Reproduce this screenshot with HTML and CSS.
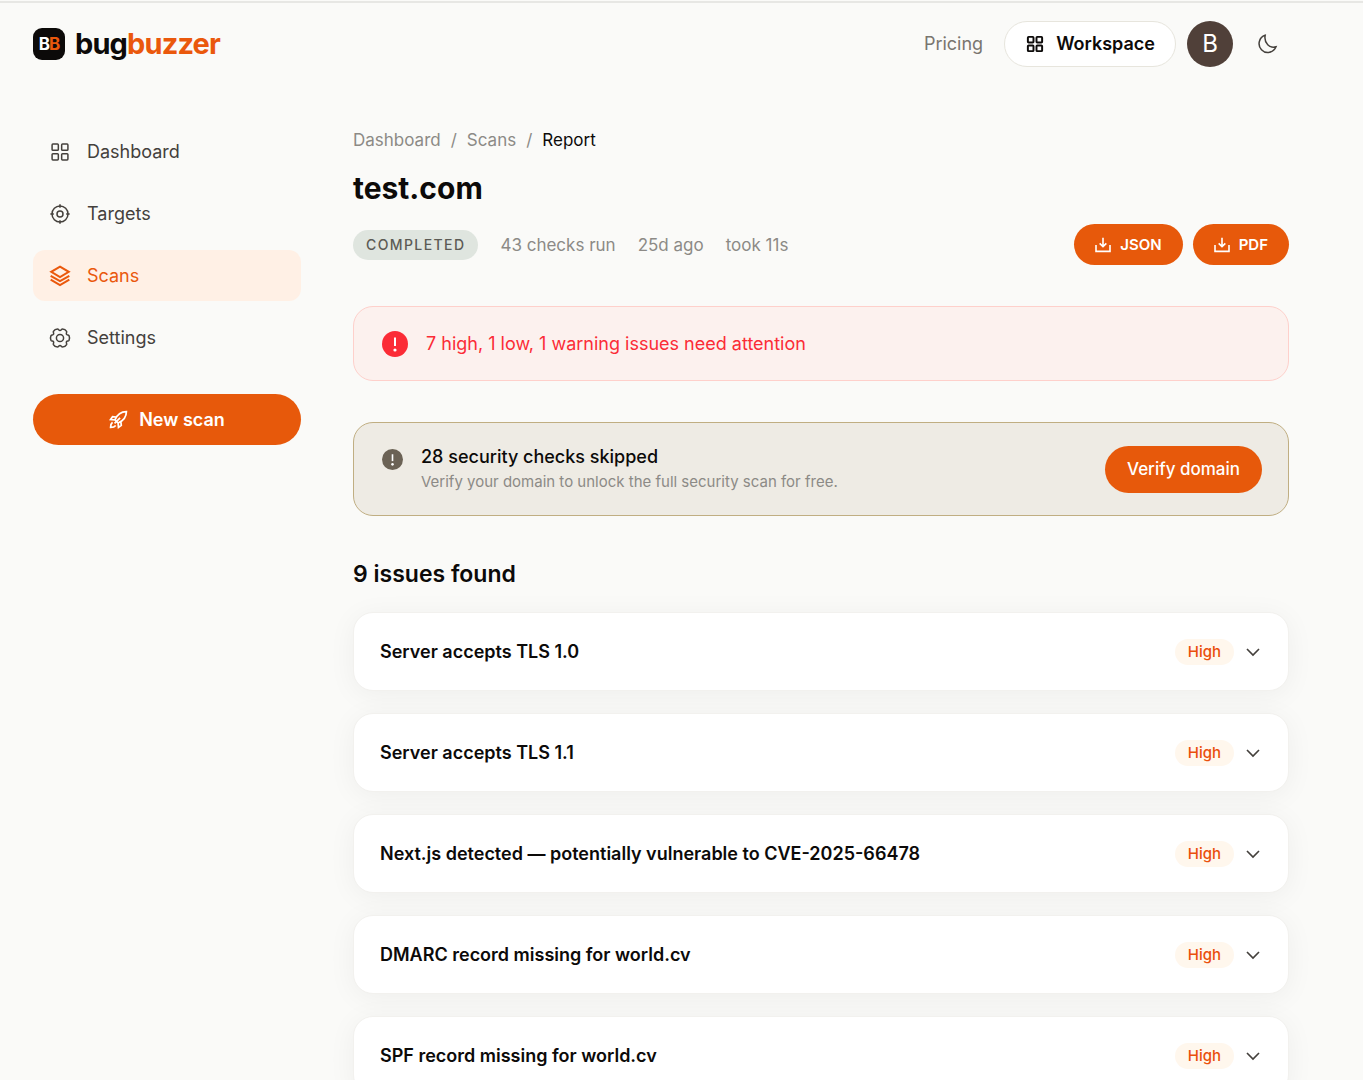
FILE: index.html
```html
<!DOCTYPE html>
<html lang="en">
<head>
    <meta charset="UTF-8">
    <meta name="viewport" content="width=device-width, initial-scale=1.0">
    <title>test.com - bugbuzzer</title>
    <link rel="stylesheet" href="styles.css">
</head>
<body>
    <!-- shared icons -->
    <svg class="sprite" aria-hidden="true">
        <symbol id="icon-grid" viewBox="0 0 24 24">
            <rect x="2.5" y="2.5" width="7.5" height="7.5" rx="1"/>
            <rect x="14" y="2.5" width="7.5" height="7.5" rx="1"/>
            <rect x="2.5" y="14" width="7.5" height="7.5" rx="1"/>
            <rect x="14" y="14" width="7.5" height="7.5" rx="1"/>
        </symbol>
        <symbol id="icon-download" viewBox="0 0 24 24">
            <path d="M12 1v13M7 9.5l5 5 5-5M1.5 12v9.500h21V12"/>
        </symbol>
        <symbol id="icon-chevron" viewBox="0 0 24 24">
            <path d="M4 8l8 8 8-8"/>
        </symbol>
        <symbol id="icon-alert" viewBox="0 0 26 26">
            <circle cx="13" cy="13" r="13" fill="currentColor" stroke="none"/>
            <path d="M13 6.5v8.5" stroke="#fff" stroke-width="2"/>
            <circle cx="13" cy="19" r="1.6" fill="#fff" stroke="none"/>
        </symbol>
    </svg>

    <header class="header">
        <a class="logo" href="#">
            <span class="logo-mark"><span>B</span><span class="orange">B</span></span>
            <span class="logo-text">bug<span class="orange">buzzer</span></span>
        </a>
        <div class="header-right">
            <a class="pricing" href="#">Pricing</a>
            <a class="workspace" href="#">
                <svg class="icon"><use href="#icon-grid"/></svg>
                Workspace
            </a>
            <button class="avatar" type="button">B</button>
            <button class="theme" type="button" aria-label="Toggle theme">
                <svg class="icon" viewBox="0 0 24 24"><path d="M9.8 1.6A10.5 10.5 0 1 0 22.8 15.4C15.5 17.5 8 11 9.8 1.6z"/></svg>
            </button>
        </div>
    </header>

    <div class="page">
        <aside class="sidebar">
            <nav class="nav">
                <a href="#">
                    <svg class="icon"><use href="#icon-grid"/></svg>
                    Dashboard
                </a>
                <a href="#">
                    <svg class="icon" viewBox="0 0 24 24"><circle cx="12" cy="12" r="9.6"/><circle cx="12" cy="12" r="3.6"/><path d="M12 .4v4.2M12 19.4v4.2M.4 12h4.2M19.4 12h4.2"/></svg>
                    Targets
                </a>
                <a class="active" href="#">
                    <svg class="icon" viewBox="0 0 24 24"><path d="M12 .8L22.5 7 12 13.2 1.5 7zM.8 11.8L12 18.2 23.2 11.8M.8 16.4L12 22.8 23.2 16.4"/></svg>
                    Scans
                </a>
                <a href="#">
                    <svg class="icon" viewBox="0 0 24 24"><circle cx="12" cy="12" r="4.3"/><path d="M12 3C13.5 3 13.6 1.2 14.9 1.2C17 1.2 19 2.5 19.9 4.1C20.5 5.5 19 6.2 19.8 7.5C20.5 8.8 22 7.8 22.8 9.1C23.7 11 23.7 13 22.8 14.9C22 16.2 20.5 15.2 19.8 16.5C19 17.8 20.5 18.5 19.9 19.9C19 21.5 17 22.8 14.9 22.8C13.6 22.8 13.5 21 12 21C10.5 21 10.4 22.8 9.1 22.8C7 22.8 5 21.5 4.1 19.9C3.5 18.5 5 17.8 4.2 16.5C3.5 15.2 2 16.2 1.2 14.9C.3 13 .3 11 1.2 9.1C2 7.8 3.5 8.8 4.2 7.5C5 6.2 3.5 5.5 4.1 4.1C5 2.5 7 1.2 9.1 1.2C10.4 1.2 10.5 3 12 3z"/></svg>
                    Settings
                </a>
            </nav>
            <button class="btn new-scan" type="button">
                <svg class="icon" viewBox="0 0 24 24"><path d="M7.5 12.5C10 6.5 14.5 2 22 2c0 7.5-4.5 12-10.5 14.5zM9 9L4.5 8.5 2 12l5.5.5M15 15l.5 4.5L12 22l-.5-5.5M4.5 15.5C2.5 17 2 19 2 22c3 0 5-.5 6.5-2.5M7 17l7-7"/></svg>
                New scan
            </button>
        </aside>

        <main class="main">
            <nav class="breadcrumb" aria-label="Breadcrumb">
                <a href="#">Dashboard</a>
                <span>/</span>
                <a href="#">Scans</a>
                <span>/</span>
                <span class="current">Report</span>
            </nav>
            <h1>test.com</h1>
            <div class="summary">
                <div class="meta">
                    <span class="status">COMPLETED</span>
                    <span>43 checks run</span>
                    <span>25d ago</span>
                    <span>took 11s</span>
                </div>
                <div class="exports">
                    <button class="btn" type="button"><svg class="icon"><use href="#icon-download"/></svg>JSON</button>
                    <button class="btn" type="button"><svg class="icon"><use href="#icon-download"/></svg>PDF</button>
                </div>
            </div>

            <div class="alert">
                <svg class="icon"><use href="#icon-alert"/></svg>
                <p>7 high, 1 low, 1 warning issues need attention</p>
            </div>

            <section class="skipped">
                <svg class="icon"><use href="#icon-alert"/></svg>
                <div class="skipped-text">
                    <h2>28 security checks skipped</h2>
                    <p>Verify your domain to unlock the full security scan for free.</p>
                </div>
                <button class="btn verify" type="button">Verify domain</button>
            </section>

            <h2 class="issues-title">9 issues found</h2>
            <div class="issues">
                <button class="issue" type="button">
                    <span class="issue-name">Server accepts TLS 1.0</span>
                    <span class="severity">High</span>
                    <svg class="icon"><use href="#icon-chevron"/></svg>
                </button>
                <button class="issue" type="button">
                    <span class="issue-name">Server accepts TLS 1.1</span>
                    <span class="severity">High</span>
                    <svg class="icon"><use href="#icon-chevron"/></svg>
                </button>
                <button class="issue" type="button">
                    <span class="issue-name">Next.js detected — potentially vulnerable to CVE-2025-66478</span>
                    <span class="severity">High</span>
                    <svg class="icon"><use href="#icon-chevron"/></svg>
                </button>
                <button class="issue" type="button">
                    <span class="issue-name">DMARC record missing for world.cv</span>
                    <span class="severity">High</span>
                    <svg class="icon"><use href="#icon-chevron"/></svg>
                </button>
                <button class="issue" type="button">
                    <span class="issue-name">SPF record missing for world.cv</span>
                    <span class="severity">High</span>
                    <svg class="icon"><use href="#icon-chevron"/></svg>
                </button>
            </div>
        </main>
    </div>
</body>
</html>
```

FILE: styles.css
```css
* {
    box-sizing: border-box;
}
body {
    margin: 0;
    padding-top: 1px;
    background-color: #fafaf8;
    color: #0c0a09;
    font-family: Inter, "Liberation Sans", sans-serif;
    font-size: 18px;
    line-height: 24px;
}
h1, h2, p {
    margin: 0;
}
a {
    color: inherit;
    text-decoration: none;
}
button {
    font: inherit;
    color: inherit;
    border: none;
    background: none;
    padding: 0;
    cursor: pointer;
}
.sprite {
    display: none;
}
.icon {
    flex: none;
    width: 20px;
    height: 20px;
    fill: none;
    stroke: currentColor;
    stroke-width: 1.8;
    overflow: visible;
}
.orange {
    color: #ea580c;
}
.btn {
    display: flex;
    align-items: center;
    justify-content: center;
    border-radius: 26px;
    background-color: #e7590b;
    color: #fff;
}

/* header */
.header {
    display: flex;
    align-items: center;
    justify-content: space-between;
    height: 83px;
    padding: 0 86px 0 33px;
    border-top: 2px solid #e7e7e4;
}
.logo {
    display: flex;
    align-items: center;
    gap: 10px;
}
.logo-mark {
    display: flex;
    align-items: center;
    justify-content: center;
    width: 32px;
    height: 32px;
    border-radius: 9px;
    background-color: #0c0a09;
    color: #fff;
    font-size: 17px;
    font-weight: 700;
    letter-spacing: -1px;
}
.logo-text {
    font-size: 29px;
    font-weight: 700;
    letter-spacing: -0.03em;
}
.header-right {
    display: flex;
    align-items: center;
}
.pricing {
    margin-right: 21px;
    color: #79756f;
}
.workspace {
    display: flex;
    align-items: center;
    gap: 12px;
    height: 46px;
    margin-right: 11px;
    padding: 0 20px 0 21px;
    border: 1px solid #e7e5dd;
    border-radius: 23px;
    background-color: #fff;
    font-weight: 600;
}
.workspace .icon {
    width: 18px;
    height: 18px;
    stroke-width: 2.6;
}
.avatar {
    width: 46px;
    height: 46px;
    margin-right: 24px;
    border-radius: 50%;
    background-color: #504039;
    color: #fff;
    font-size: 24px;
}
.theme {
    display: flex;
    color: #44403c;
}

/* layout */
.page {
    display: flex;
    gap: 52px;
    padding: 42px 74px 0 33px;
}
.sidebar {
    flex: none;
    width: 268px;
}
.nav {
    display: flex;
    flex-direction: column;
    gap: 11px;
    margin-bottom: 31px;
}
.nav a {
    display: flex;
    align-items: center;
    gap: 17px;
    height: 51px;
    padding: 0 17px;
    border-radius: 12px;
    color: #44403c;
}
.nav .active {
    background-color: #fff0e5;
    color: #ea580c;
}
.active .icon {
    stroke-width: 2.4;
}
.new-scan {
    gap: 11px;
    width: 100%;
    height: 51px;
    font-weight: 600;
}
.new-scan .icon {
    width: 19px;
    height: 19px;
    stroke-width: 2.2;
}
.main {
    flex: 1;
    min-width: 0;
    padding-top: 2px;
}

/* report heading */
.breadcrumb {
    display: flex;
    gap: 10px;
    color: #8c8a86;
    font-size: 17px;
}
.breadcrumb .current {
    color: #0c0a09;
}
h1 {
    margin: 16px 0 16px;
    font-size: 30px;
    line-height: 40px;
    font-weight: 700;
}
.summary {
    display: flex;
    align-items: center;
    justify-content: space-between;
    margin-bottom: 41px;
}
.meta {
    display: flex;
    align-items: center;
    gap: 22px;
    color: #8c8a86;
    font-size: 17px;
}
.status {
    padding: 3px 13px;
    border-radius: 16px;
    background-color: #dfe5df;
    color: #5c5b55;
    font-size: 14px;
    font-weight: 500;
    letter-spacing: 0.1em;
}
.exports {
    display: flex;
    gap: 10px;
}
.exports .btn {
    gap: 9px;
    height: 41px;
    padding: 0 21px;
    font-size: 15px;
    font-weight: 600;
}
.exports .icon {
    width: 16px;
    height: 16px;
    stroke-width: 2.4;
}

/* banners */
.alert, .skipped {
    display: flex;
    align-items: center;
    border: 1px solid #fed0cb;
    border-radius: 20px;
}
.alert {
    gap: 18px;
    height: 75px;
    margin-bottom: 41px;
    padding: 0 28px;
    background-color: #fcf1ee;
    color: #fb2c36;
}
.alert .icon {
    width: 26px;
    height: 26px;
}
.skipped {
    gap: 18px;
    margin-bottom: 42px;
    padding: 21px 26px 21px 28px;
    border-color: #c0ae82;
    background-color: #eeebe4;
}
.skipped .icon {
    align-self: flex-start;
    width: 21px;
    height: 21px;
    margin-top: 5px;
    color: #6b6255;
}
.skipped-text {
    flex: 1;
}
.skipped h2 {
    font-size: 18px;
    line-height: 26px;
    font-weight: 500;
}
.skipped p {
    color: #8c8a86;
    font-size: 15px;
}
.verify {
    height: 47px;
    padding: 0 22px;
    font-size: 17px;
    font-weight: 500;
}

/* issues */
.issues-title {
    margin-bottom: 22px;
    font-size: 23px;
    line-height: 32px;
    font-weight: 600;
}
.issues {
    display: flex;
    flex-direction: column;
    gap: 22px;
}
.issue {
    display: flex;
    align-items: center;
    height: 79px;
    padding: 0 26px;
    border: 1px solid #f2f1ee;
    border-radius: 20px;
    background-color: #fff;
    box-shadow: 0 4px 28px rgba(12, 10, 9, 0.05);
    text-align: left;
}
.issue-name {
    flex: 1;
    font-weight: 600;
}
.severity {
    margin-right: 10px;
    padding: 1px 13px;
    border-radius: 13px;
    background-color: #fff7ed;
    color: #ea4f0c;
    font-size: 15px;
    font-weight: 500;
}
.issue .icon {
    width: 18px;
    height: 18px;
    color: #44403c;
    stroke-width: 2.2;
}
```
